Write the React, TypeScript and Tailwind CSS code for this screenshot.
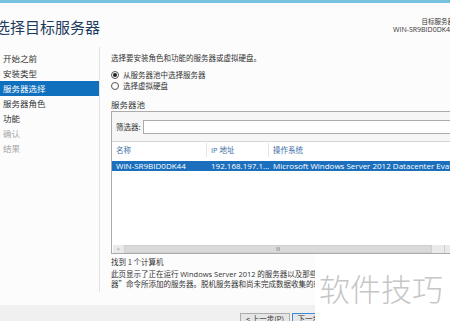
import React from 'react';

const navItems = [
  { label: '开始之前', state: 'normal' },
  { label: '安装类型', state: 'normal' },
  { label: '服务器选择', state: 'active' },
  { label: '服务器角色', state: 'normal' },
  { label: '功能', state: 'normal' },
  { label: '确认', state: 'disabled' },
  { label: '结果', state: 'disabled' },
];

function Radio({ checked, label }: { checked?: boolean; label: string }) {
  return (
    <div className="flex h-[11px] items-center gap-[4px]">
      <span className="flex h-[8px] w-[8px] items-center justify-center rounded-full border border-[#555] bg-white">
        {checked && <span className="h-[4px] w-[4px] rounded-full bg-[#222]" />}
      </span>
      <span className="text-[7.5px] leading-[11px] text-[#333]">{label}</span>
    </div>
  );
}

export default function App() {
  return (
    <div className="relative flex h-[321px] w-[450px] flex-col overflow-hidden bg-[#fcfcfc] font-['Open_Sans','Noto_Sans_CJK_SC',sans-serif]">
      {/* top accent */}
      <div className="h-[3px] shrink-0 bg-[#78c2de]" />

      {/* header */}
      <div className="flex h-[44px] shrink-0 justify-between">
        <div className="ml-[-5px] mt-[15px] font-['Noto_Sans_CJK_SC',sans-serif] text-[15px] leading-[18px] text-[#1e3a5c]">
          选择目标服务器
        </div>
        <div className="mr-[-4px] mt-[14px] text-right text-[#333]">
          <div className="font-['Noto_Sans_CJK_SC',sans-serif] text-[6.5px] leading-[8px]">目标服务器</div>
          <div className="text-[7px] leading-[10px]">WIN-SR9BID0DK44</div>
        </div>
      </div>

      {/* main */}
      <div className="flex min-h-0 flex-1">
        {/* wizard steps */}
        <div className="mb-[13px] w-[100px] shrink-0 border-r border-[#e2e2e2] pt-[4px] font-['Noto_Sans_CJK_SC',sans-serif]">
          {navItems.map((item) => (
            <div
              key={item.label}
              className={
                item.state === 'active'
                  ? 'h-[15px] bg-[#1070be] pl-[3px] text-[8.5px] leading-[15px] text-white'
                  : item.state === 'disabled'
                  ? 'h-[15px] pl-[3px] text-[8.5px] leading-[15px] text-[#a8a8a8]'
                  : 'h-[15px] pl-[3px] text-[8.5px] leading-[15px] text-[#333]'
              }
            >
              {item.label}
            </div>
          ))}
        </div>

        {/* content */}
        <div className="min-w-0 flex-1 overflow-hidden pl-[11px] pt-[5px]">
          <div className="h-[11px] font-['Noto_Sans_CJK_SC',sans-serif] text-[7.5px] leading-[11px] text-[#333]">
            选择要安装角色和功能的服务器或虚拟硬盘。
          </div>
          <div className="mt-[6px] font-['Noto_Sans_CJK_SC',sans-serif]">
            <Radio checked label="从服务器池中选择服务器" />
            <Radio label="选择虚拟硬盘" />
          </div>
          <div className="mt-[7px] h-[12px] font-['Noto_Sans_CJK_SC',sans-serif] text-[8.5px] leading-[12px] text-[#333]">
            服务器池
          </div>

          {/* server pool box */}
          <div className="mt-[1px] flex h-[143px] w-[345px] flex-col border border-[#ababab] bg-white">
            <div className="flex h-[30px] shrink-0 items-center gap-[2px] border-b border-[#d4d4d4] bg-[#f6f6f6] pl-[4px]">
              <span className="font-['Noto_Sans_CJK_SC',sans-serif] text-[7.5px] text-[#333]">筛选器:</span>
              <div className="h-[14px] flex-1 border border-[#ababab] bg-white" />
            </div>
            <div className="flex h-[15px] shrink-0 items-center text-[7.5px] text-[#3c6ea6]">
              <div className="w-[95px] shrink-0 border-r border-[#e4e4e4] pl-[4px] leading-[13px]">
                <span className="font-['Noto_Sans_CJK_SC',sans-serif]">名称</span>
              </div>
              <div className="w-[62px] shrink-0 border-r border-[#e4e4e4] pl-[4px] leading-[13px]">
                IP <span className="font-['Noto_Sans_CJK_SC',sans-serif]">地址</span>
              </div>
              <div className="pl-[4px] font-['Noto_Sans_CJK_SC',sans-serif] leading-[13px]">操作系统</div>
            </div>
            <div className="mt-[4px] flex h-[10px] shrink-0 items-center overflow-hidden whitespace-nowrap bg-[#1c6fbd] text-[8px] text-white">
              <div className="w-[95px] shrink-0 pl-[4px]">WIN-SR9BID0DK44</div>
              <div className="w-[62px] shrink-0 pl-[4px]">192.168.197.1...</div>
              <div className="shrink-0 pl-[4px]">Microsoft Windows Server 2012 Datacenter Evaluation</div>
            </div>
            <div className="flex-1" />
            {/* horizontal scrollbar */}
            <div className="mx-[1px] flex h-[8px] shrink-0 items-stretch bg-[#eaeaea]">
              <div className="flex w-[11px] items-center justify-center text-[6px] leading-none text-[#777]">&lt;</div>
              <div className="flex w-[308px] items-center justify-center border border-[#cfcfcf] bg-[#dadada] text-[5px] leading-none text-[#666]">
                III
              </div>
              <div className="w-[13px] border-r border-[#cfcfcf]" />
            </div>
          </div>

          <div className="mt-[2px] h-[11px] font-['Noto_Sans_CJK_SC',sans-serif] text-[7.5px] leading-[11px] text-[#333]">
            找到 1 个计算机
          </div>
          <div className="mt-[2px] whitespace-nowrap font-['Noto_Sans_CJK_SC',sans-serif] text-[7.5px] leading-[10px] text-[#333]">
            <div>
              此页显示了正在运行 <span className="font-['Open_Sans',sans-serif]">Windows Server 2012</span> 的服务器以及那些已经在服务器管理器中使用“添加服务
            </div>
            <div>器”命令所添加的服务器。脱机服务器和尚未完成数据收集的新添加的服务器将不会显示。</div>
          </div>
        </div>
      </div>

      {/* bottom buttons */}
      <div className="flex h-[16px] shrink-0 gap-[2px] bg-[#f0f0f0] pl-[240px] pt-[8px]">
        <div className="flex h-[12px] w-[50px] items-center justify-center border border-[#adadad] bg-[#e6e6e6] font-['Noto_Sans_CJK_SC',sans-serif] text-[7.5px] text-[#333]">
          &lt; 上一步(P)
        </div>
        <div className="flex h-[12px] w-[50px] items-center justify-center border border-[#3c8bd6] bg-[#e6e6e6] font-['Noto_Sans_CJK_SC',sans-serif] text-[7.5px] text-[#333]">
          下一步(N) &gt;
        </div>
      </div>

      {/* watermark */}
      <div className="absolute left-[315px] top-[254px] flex h-[67px] w-[135px] items-center bg-white pl-[4px]">
        <span className="whitespace-nowrap font-['Noto_Sans_CJK_SC',sans-serif] text-[31px] font-light leading-none text-[#c6c6c6]">
          软件技巧
        </span>
      </div>
    </div>
  );
}
